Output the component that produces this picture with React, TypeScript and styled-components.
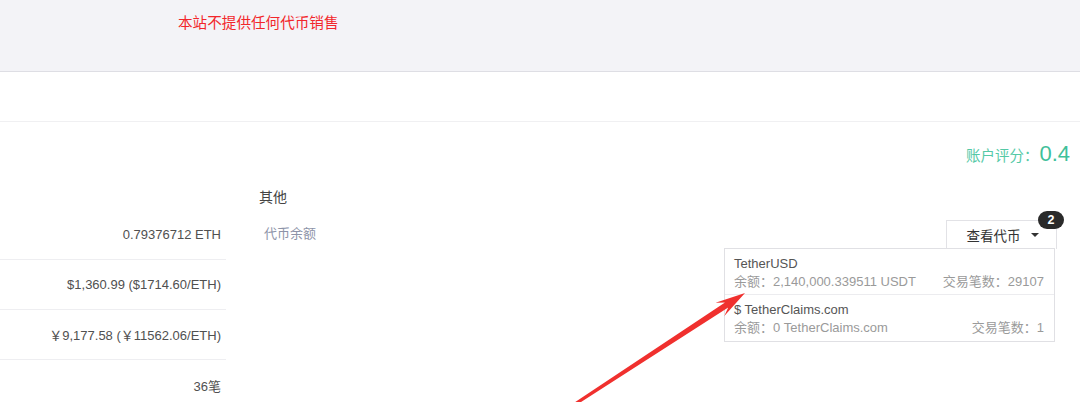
import { FC } from 'react';
import styled, { createGlobalStyle } from 'styled-components';

const GlobalStyle = createGlobalStyle`
  html, body {
    margin: 0;
    padding: 0;
    background: #fff;
    font-family: "Liberation Sans", Arial, "Noto Sans CJK SC", sans-serif;
    overflow: hidden;
  }
`;

const Page = styled.div`
  position: relative;
  width: 1080px;
  height: 402px;
  overflow: hidden;
`;

const Notice = styled.div`
  height: 71px;
  background: #f3f3f7;
  border-bottom: 1px solid #dedee4;
  box-sizing: content-box;
  padding-left: 178px;

  span {
    display: inline-block;
    margin-top: 14px;
    color: #f2262b;
    font-size: 14.6px;
    line-height: 18px;
  }
`;

const Band = styled.div`
  height: 49px;
  border-bottom: 1px solid #f0f0f2;
`;

const Columns = styled.div`
  display: flex;
`;

const InfoColumn = styled.div`
  width: 226px;
  padding-top: 88px;
`;

const InfoRow = styled.div<{ last?: boolean }>`
  height: 50px;
  box-sizing: border-box;
  border-bottom: ${p => (p.last ? 'none' : '1px solid #eeeef1')};
  display: flex;
  align-items: center;
  justify-content: flex-end;
  padding-right: 5px;
  font-size: 13px;
  color: #505050;
`;

const OtherColumn = styled.div`
  margin-left: 33px;
  padding-top: 65px;
`;

const SectionTitle = styled.div`
  font-size: 14px;
  line-height: 20px;
  color: #444;
`;

const FieldLabel = styled.div`
  margin-top: 18px;
  margin-left: 5px;
  font-size: 13px;
  line-height: 18px;
  color: #8d93a8;
`;

const RightColumn = styled.div`
  flex: 1;
  display: flex;
  flex-direction: column;
  align-items: flex-end;
  padding-right: 10px;
`;

const Score = styled.div`
  margin-top: 19px;
  display: flex;
  align-items: baseline;
  color: #55c9a6;
  font-size: 14.5px;

  b {
    font-weight: normal;
    font-size: 22px;
    color: #3fc09a;
    margin-left: 1px;
  }
`;

const TokenPicker = styled.div`
  position: relative;
  margin-top: 53px;
  margin-right: 13px;
`;

const PickerButton = styled.div`
  width: 111px;
  height: 29px;
  box-sizing: border-box;
  border: 1px solid #e2e2e6;
  border-bottom: none;
  background: #fff;
  display: flex;
  align-items: center;
  justify-content: center;
  gap: 10px;
  font-size: 13.5px;
  color: #333;
  padding-left: 2px;
`;

const Caret = styled.span`
  width: 0;
  height: 0;
  border-left: 4px solid transparent;
  border-right: 4px solid transparent;
  border-top: 4px solid #333;
`;

const Badge = styled.div`
  position: absolute;
  top: -9px;
  right: -7px;
  min-width: 26px;
  height: 18px;
  border-radius: 9px;
  background: #2a2a2a;
  color: #fff;
  font-size: 12.5px;
  font-weight: bold;
  line-height: 18px;
  text-align: center;
`;

const Menu = styled.div`
  position: absolute;
  top: 28px;
  right: 2px;
  width: 331px;
  box-sizing: border-box;
  border: 1px solid #e0e0e4;
  background: #fff;
`;

const MenuItem = styled.div<{ last?: boolean }>`
  padding: 6px 10px 6px 9px;
  height: 46px;
  box-sizing: border-box;
  border-bottom: ${p => (p.last ? 'none' : '1px solid #ececef')};
  font-size: 13px;
`;

const ItemName = styled.div`
  color: #555;
  line-height: 17px;
`;

const ItemMeta = styled.div`
  display: flex;
  justify-content: space-between;
  color: #9a9a9a;
  line-height: 18px;
  margin-top: 1px;
`;

const Annotation = styled.svg`
  position: absolute;
  left: 0;
  top: 0;
  pointer-events: none;
`;

type Token = { name: string; balance: string; txs: string };

const tokens: Token[] = [
  { name: 'TetherUSD', balance: '2,140,000.339511 USDT', txs: '29107' },
  { name: '$ TetherClaims.com', balance: '0 TetherClaims.com', txs: '1' }
];

const rows = [
  '0.79376712 ETH',
  '$1,360.99 ($1714.60/ETH)',
  '￥9,177.58 (￥11562.06/ETH)',
  '36笔'
];

const App: FC = () => {
  return <Page>
    <GlobalStyle />
    <Notice><span>本站不提供任何代币销售</span></Notice>
    <Band />
    <Columns>
      <InfoColumn>
        {rows.map((r, i) =>
          <InfoRow key={r} last={i === rows.length - 1}>{r}</InfoRow>
        )}
      </InfoColumn>
      <OtherColumn>
        <SectionTitle>其他</SectionTitle>
        <FieldLabel>代币余额</FieldLabel>
      </OtherColumn>
      <RightColumn>
        <Score>账户评分：<b>0.4</b></Score>
        <TokenPicker>
          <PickerButton>查看代币 <Caret /></PickerButton>
          <Badge>2</Badge>
          <Menu>
            {tokens.map((t, i) =>
              <MenuItem key={t.name} last={i === tokens.length - 1}>
                <ItemName>{t.name}</ItemName>
                <ItemMeta>
                  <span>余额：{t.balance}</span>
                  <span>交易笔数：{t.txs}</span>
                </ItemMeta>
              </MenuItem>
            )}
          </Menu>
        </TokenPicker>
      </RightColumn>
    </Columns>
    {/* red annotation arrow pointing at the first token */}
    <Annotation width="1080" height="402" viewBox="0 0 1080 402">
      <polygon
        fill="#f0302e"
        points="572.8,407.3 728.2,307.5 724.3,316.1 745,293 715.5,302.7 725,302.5 571.2,404.7"
      />
    </Annotation>
  </Page>;
};

export default App;
